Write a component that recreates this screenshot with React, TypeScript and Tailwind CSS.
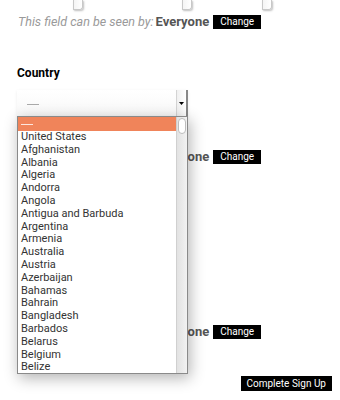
import React from 'react';

const countries = [
  'United States', 'Afghanistan', 'Albania', 'Algeria', 'Andorra', 'Angola',
  'Antigua and Barbuda', 'Argentina', 'Armenia', 'Australia', 'Austria',
  'Azerbaijan', 'Bahamas', 'Bahrain', 'Bangladesh', 'Barbados', 'Belarus',
  'Belgium', 'Belize',
];

const SelectStub = ({ className }: { className: string }) => (
  <div className={`${className} w-[10px] h-[10px] border-x border-b border-[#c8c8c8] rounded-br-[3px] bg-gradient-to-r from-[#f4f4f4] to-white shadow-[1px_1px_2px_rgba(0,0,0,0.25)]`} />
);

const Privacy = ({ className = '' }: { className?: string }) => (
  <div className={`flex items-center h-[14px] pl-[18px] ${className}`}>
    <span className="text-[12.5px] italic text-[#9a9a9a]">This field can be seen by:</span>
    <span className="ml-[2px] text-[13px] font-bold text-[#555]">Everyone</span>
    <button className="ml-[4px] h-[14px] px-[7px] bg-black text-white text-[10px] leading-none">Change</button>
  </div>
);

export default function App() {
  return (
    <div className="relative w-[340px] h-[400px] overflow-hidden bg-white font-['Roboto',sans-serif]">
      {/* bottoms of the date selects, cut off at the top */}
      <div className="flex">
        <SelectStub className="ml-[73px]" />
        <SelectStub className="ml-[99px]" />
        <SelectStub className="ml-[70px]" />
      </div>

      <Privacy className="mt-[5px]" />

      <div className="mt-[37px] pl-[17px] text-[12px] font-bold text-black leading-[14px]">Country</div>

      {/* closed select */}
      <div className="ml-[17px] mt-[10px] w-[171px] h-[29px] flex bg-gradient-to-b from-white to-[#f7f7f7] shadow-[0_1px_3px_rgba(0,0,0,0.08)]">
        <div className="flex-1 flex items-center pl-[10px]">
          <span className="block w-[12px] h-px bg-[#aaa]" />
        </div>
        <div className="w-[12px] flex items-center justify-center pb-[3px] border-l border-[#d4d4d4] border-r-2 border-r-[#888] bg-gradient-to-r from-[#f0f0f0] to-white">
          <svg width="5" height="3" viewBox="0 0 5 3"><path d="M0 0h5L2.5 3z" fill="#000" /></svg>
        </div>
      </div>

      <div className="mt-[31px]">
        <Privacy />
      </div>

      <div className="mt-[161px]">
        <Privacy />
      </div>

      <div className="mt-[37px] flex justify-end pr-[8px]">
        <button className="h-[15px] px-[6px] bg-black text-white text-[10px] leading-none">Complete Sign Up</button>
      </div>

      {/* open dropdown list */}
      <div className="absolute left-[17px] top-[116px] w-[171px] h-[258px] bg-white border border-[#8a8a8a] shadow-[2px_4px_14px_rgba(0,0,0,0.3)] flex">
        <ul className="flex-1 text-[11px] text-[#333] leading-[12.8px]">
          <li className="h-[14px] bg-[#f0845a] flex items-center pl-[3px]">
            <span className="block w-[12px] h-px bg-white/80" />
          </li>
          {countries.map((c) => (
            <li key={c} className="h-[12.8px] pl-[3px] whitespace-nowrap">{c}</li>
          ))}
        </ul>
        <div className="w-[11px] bg-gradient-to-r from-[#e2e2e2] to-[#f2f2f2] border-l border-[#d0d0d0] pt-px">
          <div className="mx-auto w-[8px] h-[16px] bg-white border border-[#bdbdbd] rounded-full" />
        </div>
      </div>
    </div>
  );
}
